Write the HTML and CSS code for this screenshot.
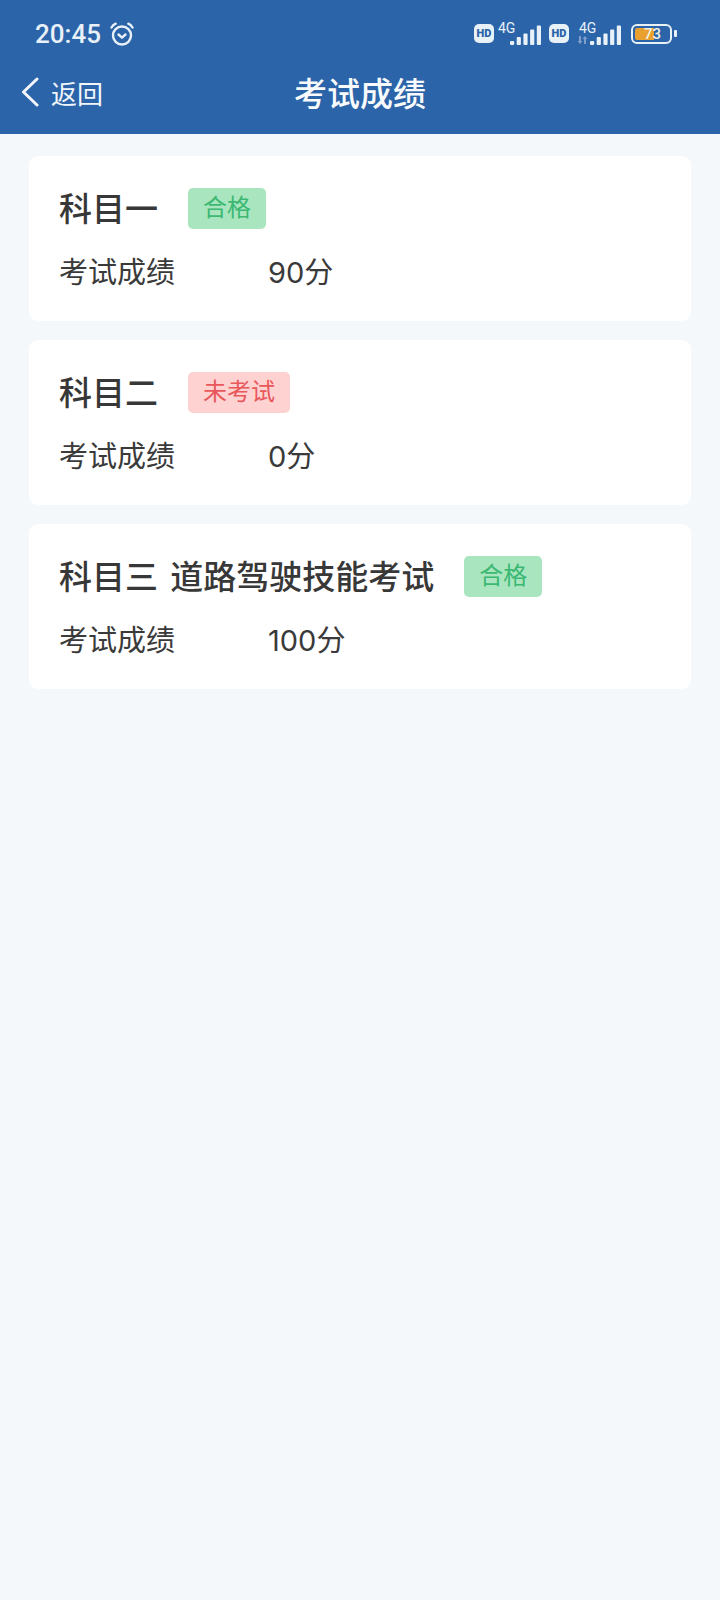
FILE: index.html
```html
<!doctype html>
<html lang="zh-CN">
<head>
  <meta charset="utf-8">
  <meta name="viewport" content="width=device-width, initial-scale=1.0" />
  <title>考试成绩</title>
  <link rel="stylesheet" href="styles.css">
</head>
<body>
<header class="topbar">
  <div class="statusbar">
    <div class="status-left">
      <span class="time">20:45</span>
      <svg class="alarm" width="26" height="26" viewBox="0 0 26 26" fill="none" stroke="#e8f0f8" stroke-width="2.4" stroke-linecap="round" stroke-linejoin="round">
        <circle cx="13" cy="14.5" r="9"/>
        <path d="M9.5 13.5l3.5 3.2 3.5-3.2"/>
        <path d="M2.5 6.5c1-1.8 2.4-3 4.2-3.8"/>
        <path d="M23.5 6.5c-1-1.8-2.4-3-4.2-3.8"/>
      </svg>
    </div>
    <div class="status-right">
      <span class="hd">HD</span>
      <span class="net">
        <span class="net-label">4G</span>
        <svg width="31" height="20" viewBox="0 0 31 20" fill="#e8f0f8">
          <rect x="0" y="16" width="4.2" height="4" rx="1"/>
          <rect x="6.7" y="12" width="4.2" height="8" rx="1"/>
          <rect x="13.4" y="8.5" width="4.2" height="11.5" rx="1"/>
          <rect x="20.1" y="4.5" width="4.2" height="15.5" rx="1"/>
          <rect x="26.8" y="0.5" width="4.2" height="19.5" rx="1"/>
        </svg>
      </span>
      <span class="hd">HD</span>
      <span class="net net-second">
        <svg class="arrows" width="11" height="8" viewBox="0 0 11 8" fill="#7f9fca">
          <path d="M2 0h2v5h1.500L3 8 0.500 5H2z"/>
          <path d="M7 8h2V3h1.500L8 0 5.500 3H7z"/>
        </svg>
        <span class="net-label">4G</span>
        <svg width="31" height="20" viewBox="0 0 31 20" fill="#e8f0f8">
          <rect x="0" y="16" width="4.2" height="4" rx="1"/>
          <rect x="6.7" y="12" width="4.2" height="8" rx="1"/>
          <rect x="13.4" y="8.5" width="4.2" height="11.5" rx="1"/>
          <rect x="20.1" y="4.5" width="4.2" height="15.5" rx="1"/>
          <rect x="26.8" y="0.5" width="4.2" height="19.5" rx="1"/>
        </svg>
      </span>
      <span class="battery">
        <span class="battery-body"><span class="battery-fill"></span><span class="battery-num">73</span></span>
        <span class="battery-cap"></span>
      </span>
    </div>
  </div>
  <nav class="navbar">
    <div class="back">
      <svg width="18" height="30" viewBox="0 0 18 30" fill="none" stroke="#f2f6fb" stroke-width="3" stroke-linecap="round" stroke-linejoin="round">
        <path d="M16 2L2.500 15 16 28"/>
      </svg>
      <span>返回</span>
    </div>
    <h1>考试成绩</h1>
  </nav>
</header>

<main class="list">
  <section class="card">
    <div class="card-head">
      <h2>科目一</h2>
      <span class="tag pass">合格</span>
    </div>
    <div class="score"><span class="score-label">考试成绩</span><span>90分</span></div>
  </section>
  <section class="card">
    <div class="card-head">
      <h2>科目二</h2>
      <span class="tag absent">未考试</span>
    </div>
    <div class="score"><span class="score-label">考试成绩</span><span>0分</span></div>
  </section>
  <section class="card">
    <div class="card-head">
      <h2>科目三 道路驾驶技能考试</h2>
      <span class="tag pass">合格</span>
    </div>
    <div class="score"><span class="score-label">考试成绩</span><span>100分</span></div>
  </section>
</main>
</body>
</html>
```

FILE: styles.css
```css
* {
  box-sizing: border-box;
}
html, body {
  height: 100%;
}
body {
  margin: 0;
  background: #f4f8fa;
  color: #333;
  font-family: Roboto, "Noto Sans CJK SC", sans-serif;
}

.topbar {
  height: 134px;
  background: #2b64a9;
  color: #fff;
  padding-top: 16px;
}
.statusbar {
  height: 35px;
  padding: 0 43px 0 35px;
  display: flex;
  justify-content: space-between;
  align-items: center;
}
.status-left {
  display: flex;
  align-items: center;
  gap: 8px;
}
.time {
  font-size: 26px;
  font-weight: 500;
  color: #e8f0f8;
}
.status-right {
  display: flex;
  align-items: center;
  color: #e8f0f8;
}
.hd {
  width: 20px;
  height: 19px;
  border-radius: 5px;
  background: #e8f0f8;
  color: #2b64a9;
  font-size: 11px;
  font-weight: 900;
  line-height: 19px;
  text-align: center;
}
.net {
  position: relative;
  width: 47px;
  height: 22px;
  margin-right: 8px;
  display: flex;
  align-items: flex-end;
  justify-content: flex-end;
}
.net-second {
  width: 52px;
  margin-right: 10px;
}
.net-label {
  position: absolute;
  top: -2px;
  left: 4px;
  font-size: 14px;
  line-height: 14px;
}
.net-second .net-label {
  left: 10px;
}
.arrows {
  position: absolute;
  left: 8px;
  bottom: 1px;
}
.battery {
  display: flex;
  align-items: center;
  gap: 2px;
}
.battery-body {
  position: relative;
  width: 41px;
  height: 20px;
  border: 2px solid #e8f0f8;
  border-radius: 6px;
  display: block;
}
.battery-fill {
  position: absolute;
  top: 2px;
  bottom: 2px;
  left: 2px;
  width: 19px;
  border-radius: 2px 0 0 2px;
  background: #e9a02f;
}
.battery-num {
  position: absolute;
  top: 0;
  left: 11px;
  font-size: 15px;
  line-height: 16px;
  font-weight: 500;
  color: #f4f0e0;
}
.battery-cap {
  width: 3px;
  height: 7px;
  border-radius: 1px;
  background: #e8f0f8;
}

.navbar {
  height: 82px;
  padding: 0 21px;
  display: grid;
  grid-template-columns: 1fr auto 1fr;
  align-items: center;
}
.navbar h1 {
  margin: 0;
  font-size: 33px;
  font-weight: 500;
  color: #f8fafc;
}
.back {
  display: flex;
  align-items: center;
  gap: 12px;
  font-size: 26px;
  color: #f2f6fb;
}

.list {
  padding: 22px 29px;
  display: flex;
  flex-direction: column;
  gap: 19px;
}
.card {
  height: 165px;
  padding: 32px 30px 0;
  background: #fff;
  border-radius: 9px;
}
.card-head {
  height: 41px;
  display: flex;
  align-items: center;
  gap: 30px;
}
.card-head h2 {
  margin: 0 0 4px;
  font-size: 33px;
  font-weight: 500;
  word-spacing: 4px;
  color: #383838;
}
.tag {
  height: 41px;
  padding: 0 15px;
  border-radius: 5px;
  font-size: 24px;
  line-height: 41px;
}
.pass {
  background: #a9e6bf;
  color: #3cb873;
}
.absent {
  background: #ffd2d2;
  color: #e8575a;
}
.score {
  margin-top: 23px;
  display: flex;
  align-items: center;
  font-family: Inter, "Noto Sans CJK SC", sans-serif;
  font-size: 29px;
  line-height: 42px;
  color: #3a3a3a;
}
.score-label {
  width: 209px;
}
```
